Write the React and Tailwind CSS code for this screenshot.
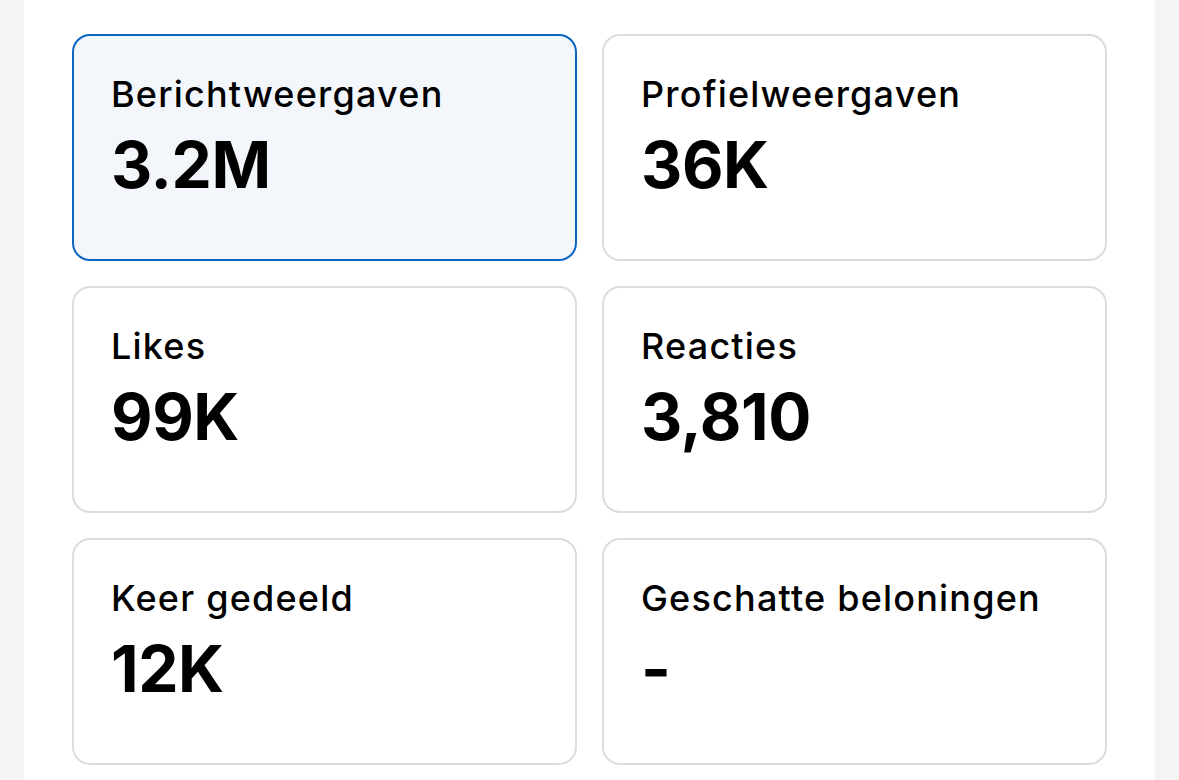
import React from "react";

const stats = [
  { label: "Berichtweergaven", value: "3.2M", active: true },
  { label: "Profielweergaven", value: "36K" },
  { label: "Likes", value: "99K" },
  { label: "Reacties", value: "3,810" },
  { label: "Keer gedeeld", value: "12K" },
  { label: "Geschatte beloningen", value: "-" },
];

export default function App() {
  return (
    <div className="w-[1179px] h-[780px] overflow-hidden bg-[#f4f4f4] flex" style={{ fontFamily: 'Inter, "Noto Sans", sans-serif' }}>
      <div className="ml-[24px] w-[1131px] h-full bg-white px-[48px] pt-[34px]">
        <div className="grid grid-cols-2 gap-x-[25px] gap-y-[25px]">
          {stats.map((s) => (
            <div
              key={s.label}
              className={
                s.active
                  ? "h-[227px] rounded-[18px] border-2 border-[#0a66c2] bg-[#f3f7fc] px-[37px] pt-[34px]"
                  : "h-[227px] rounded-[18px] border-2 border-[#dcdcdc] bg-white px-[37px] pt-[34px]"
              }
            >
              <div className="text-[36px] leading-[48px] text-black font-medium tracking-[1.2px]">{s.label}</div>
              <div className="text-[64px] leading-[72px] text-black font-bold mt-[11px] tracking-[-0.4px]">{s.value}</div>
            </div>
          ))}
        </div>
      </div>
    </div>
  );
}
